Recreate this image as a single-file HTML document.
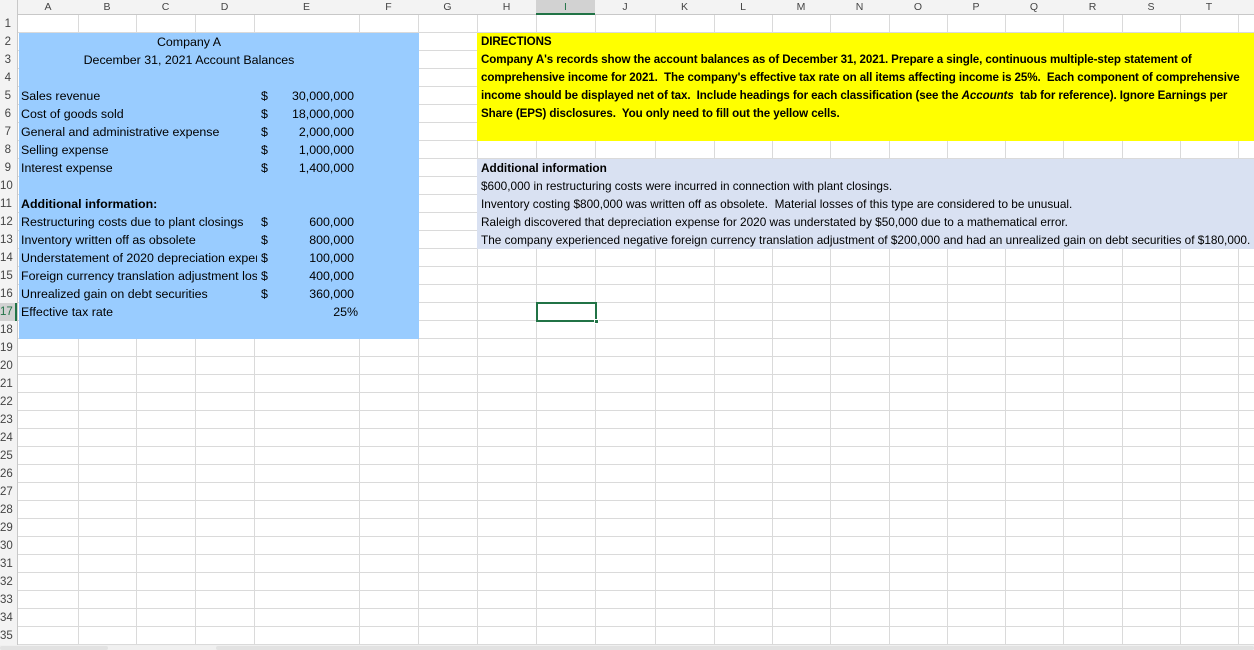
<!DOCTYPE html>
<html><head><meta charset="utf-8"><style>
*{margin:0;padding:0;box-sizing:border-box}
body{width:1254px;height:650px;overflow:hidden;background:#fff;position:relative;font-family:"Liberation Sans",Arial,sans-serif;color:#000}
.v{position:absolute;top:0;width:1px;height:645px;background:#dadada}
#rows{position:absolute;left:0;top:15px;width:1254px;height:630px;background:repeating-linear-gradient(to bottom,transparent 0,transparent 17px,#dadada 17px,#dadada 18px)}
#hdr{position:absolute;left:0;top:0;width:1254px;height:15px;background:#f3f3f3;border-bottom:1px solid #c8c8c8}
#rh{position:absolute;left:0;top:0;width:18px;height:645px;background:#f3f3f3;border-right:1px solid #c8c8c8}
.ch{position:absolute;top:0;height:15px;line-height:15px;font-size:10.5px;text-align:center;color:#444}
.rn{position:absolute;left:0;width:17px;height:18px;line-height:18px;font-size:11.5px;color:#444;text-align:right;padding-right:6px}
.f{position:absolute}
.t{position:absolute;height:18px;line-height:18px;font-size:12.4px;white-space:nowrap}
.b{font-weight:bold}
.d{position:absolute;height:18px;line-height:18px;font-size:11.6px;white-space:nowrap;font-weight:bold;letter-spacing:-0.1px}
.a{position:absolute;height:18px;line-height:18px;font-size:11.8px;white-space:nowrap}
</style></head><body>
<div id="rows"></div>
<div class="v" style="left:78px"></div><div class="v" style="left:136px"></div><div class="v" style="left:195px"></div><div class="v" style="left:254px"></div><div class="v" style="left:359px"></div><div class="v" style="left:418px"></div><div class="v" style="left:477px"></div><div class="v" style="left:536px"></div><div class="v" style="left:595px"></div><div class="v" style="left:655px"></div><div class="v" style="left:714px"></div><div class="v" style="left:772px"></div><div class="v" style="left:830px"></div><div class="v" style="left:889px"></div><div class="v" style="left:947px"></div><div class="v" style="left:1005px"></div><div class="v" style="left:1063px"></div><div class="v" style="left:1122px"></div><div class="v" style="left:1180px"></div><div class="v" style="left:1238px"></div>

<div class="f" style="left:19px;top:33px;width:400px;height:306px;background:#99ccff"></div>
<div class="f" style="left:477px;top:33px;width:777px;height:108px;background:#ffff00"></div>
<div class="f" style="left:477px;top:159px;width:777px;height:90px;background:#d9e1f2"></div>

<div id="hdr"></div>
<div id="rh"></div>
<div class="ch" style="left:18px;width:60px">A</div><div class="ch" style="left:78px;width:58px">B</div><div class="ch" style="left:136px;width:59px">C</div><div class="ch" style="left:195px;width:59px">D</div><div class="ch" style="left:254px;width:105px">E</div><div class="ch" style="left:359px;width:59px">F</div><div class="ch" style="left:418px;width:59px">G</div><div class="ch" style="left:477px;width:59px">H</div><div class="ch" style="left:536px;width:59px;background:#d2d2d2;border-bottom:2px solid #217346;color:#217346">I</div><div class="ch" style="left:595px;width:60px">J</div><div class="ch" style="left:655px;width:59px">K</div><div class="ch" style="left:714px;width:58px">L</div><div class="ch" style="left:772px;width:58px">M</div><div class="ch" style="left:830px;width:59px">N</div><div class="ch" style="left:889px;width:58px">O</div><div class="ch" style="left:947px;width:58px">P</div><div class="ch" style="left:1005px;width:58px">Q</div><div class="ch" style="left:1063px;width:59px">R</div><div class="ch" style="left:1122px;width:58px">S</div><div class="ch" style="left:1180px;width:58px">T</div>

<div class="rn" style="top:15px">1</div><div class="rn" style="top:33px">2</div><div class="rn" style="top:51px">3</div><div class="rn" style="top:69px">4</div><div class="rn" style="top:87px">5</div><div class="rn" style="top:105px">6</div><div class="rn" style="top:123px">7</div><div class="rn" style="top:141px">8</div><div class="rn" style="top:159px">9</div><div class="rn" style="top:177px">10</div><div class="rn" style="top:195px">11</div><div class="rn" style="top:213px">12</div><div class="rn" style="top:231px">13</div><div class="rn" style="top:249px">14</div><div class="rn" style="top:267px">15</div><div class="rn" style="top:285px">16</div><div class="rn" style="top:303px;background:#d2d2d2;color:#217346;border-right:2px solid #217346">17</div><div class="rn" style="top:321px">18</div><div class="rn" style="top:339px">19</div><div class="rn" style="top:357px">20</div><div class="rn" style="top:375px">21</div><div class="rn" style="top:393px">22</div><div class="rn" style="top:411px">23</div><div class="rn" style="top:429px">24</div><div class="rn" style="top:447px">25</div><div class="rn" style="top:465px">26</div><div class="rn" style="top:483px">27</div><div class="rn" style="top:501px">28</div><div class="rn" style="top:519px">29</div><div class="rn" style="top:537px">30</div><div class="rn" style="top:555px">31</div><div class="rn" style="top:573px">32</div><div class="rn" style="top:591px">33</div><div class="rn" style="top:609px">34</div><div class="rn" style="top:627px">35</div>

<div class="t" style="left:19px;width:340px;top:33px;text-align:center">Company A</div>
<div class="t" style="left:19px;width:340px;top:51px;text-align:center">December 31, 2021 Account Balances</div>

<div class="t" style="left:21px;top:87px">Sales revenue</div>
<div class="t" style="left:21px;top:105px">Cost of goods sold</div>
<div class="t" style="left:21px;top:123px">General and administrative expense</div>
<div class="t" style="left:21px;top:141px">Selling expense</div>
<div class="t" style="left:21px;top:159px">Interest expense</div>
<div class="t b" style="left:21px;top:195px">Additional information:</div>
<div class="t" style="left:21px;top:213px">Restructuring costs due to plant closings</div>
<div class="t" style="left:21px;top:231px">Inventory written off as obsolete</div>
<div class="t" style="left:21px;top:249px;width:236px;overflow:hidden">Understatement of 2020 depreciation expense</div>
<div class="t" style="left:21px;top:267px;width:236px;overflow:hidden">Foreign currency translation adjustment loss</div>
<div class="t" style="left:21px;top:285px">Unrealized gain on debt securities</div>
<div class="t" style="left:21px;top:303px">Effective tax rate</div>

<div class="t" style="left:261px;top:87px">$</div><div class="t" style="left:261px;top:105px">$</div><div class="t" style="left:261px;top:123px">$</div><div class="t" style="left:261px;top:141px">$</div><div class="t" style="left:261px;top:159px">$</div>
<div class="t" style="left:261px;top:213px">$</div><div class="t" style="left:261px;top:231px">$</div><div class="t" style="left:261px;top:249px">$</div><div class="t" style="left:261px;top:267px">$</div><div class="t" style="left:261px;top:285px">$</div>
<div class="t" style="left:254px;width:100px;text-align:right;top:87px">30,000,000</div>
<div class="t" style="left:254px;width:100px;text-align:right;top:105px">18,000,000</div>
<div class="t" style="left:254px;width:100px;text-align:right;top:123px">2,000,000</div>
<div class="t" style="left:254px;width:100px;text-align:right;top:141px">1,000,000</div>
<div class="t" style="left:254px;width:100px;text-align:right;top:159px">1,400,000</div>
<div class="t" style="left:254px;width:100px;text-align:right;top:213px">600,000</div>
<div class="t" style="left:254px;width:100px;text-align:right;top:231px">800,000</div>
<div class="t" style="left:254px;width:100px;text-align:right;top:249px">100,000</div>
<div class="t" style="left:254px;width:100px;text-align:right;top:267px">400,000</div>
<div class="t" style="left:254px;width:100px;text-align:right;top:285px">360,000</div>
<div class="t" style="left:254px;width:104px;text-align:right;top:303px">25%</div>

<div class="d" style="left:481px;top:33px">DIRECTIONS</div>
<div class="d" style="left:481px;top:51px">Company A's records show the account balances as of December 31, 2021. Prepare a single, continuous multiple-step statement of</div>
<div class="d" style="left:481px;top:69px">comprehensive income for 2021.&nbsp; The company's effective tax rate on all items affecting income is 25%.&nbsp; Each component of comprehensive</div>
<div class="d" style="left:481px;top:87px">income should be displayed net of tax.&nbsp; Include headings for each classification (see the <i>Accounts</i>&nbsp; tab for reference). Ignore Earnings per</div>
<div class="d" style="left:481px;top:105px">Share (EPS) disclosures.&nbsp; You only need to fill out the yellow cells.</div>

<div class="a b" style="left:481px;top:159px">Additional information</div>
<div class="a" style="left:481px;top:177px">$600,000 in restructuring costs were incurred in connection with plant closings.</div>
<div class="a" style="left:481px;top:195px">Inventory costing $800,000 was written off as obsolete.&nbsp; Material losses of this type are considered to be unusual.</div>
<div class="a" style="left:481px;top:213px">Raleigh discovered that depreciation expense for 2020 was understated by $50,000 due to a mathematical error.</div>
<div class="a" style="left:481px;top:231px;width:773px;overflow:hidden">The company experienced negative foreign currency translation adjustment of $200,000 and had an unrealized gain on debt securities of $180,000.</div>

<div class="f" style="left:536px;top:302px;width:61px;height:20px;border:2px solid #217346"></div>
<div class="f" style="left:594px;top:319px;width:5px;height:5px;background:#217346;border:1px solid #fff"></div>

<div class="f" style="left:0;top:645px;width:1254px;height:5px;background:#f0f0f0"></div>
<div class="f" style="left:0;top:646px;width:108px;height:4px;background:#e2e2e2;border-radius:2px"></div>
<div class="f" style="left:216px;top:646px;width:1038px;height:4px;background:#e2e2e2;border-radius:2px"></div>
</body></html>
